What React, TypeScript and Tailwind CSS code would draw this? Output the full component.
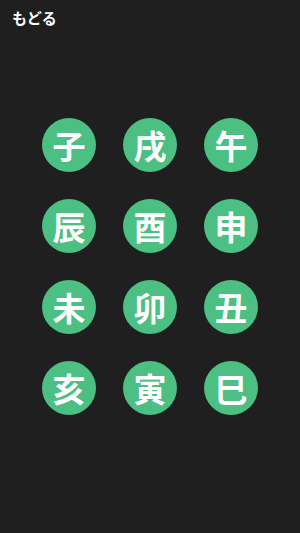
import React from 'react';

const signs = ['子', '戌', '午', '辰', '酉', '申', '未', '卯', '丑', '亥', '寅', '巳'];

export default function App() {
  return (
    <div
      className="w-[300px] h-[533px] bg-[#1e1f1e] text-white flex flex-col"
      style={{ fontFamily: '"Noto Sans CJK JP", "Noto Sans", sans-serif' }}
    >
      {/* Header */}
      <div className="h-[34px] px-3 flex items-center">
        <button className="text-[15px] font-bold leading-none">もどる</button>
      </div>

      {/* Zodiac grid */}
      <div className="mt-[84px] grid grid-cols-[repeat(3,54px)] gap-[27px] justify-center">
        {signs.map(s => (
          <div
            key={s}
            className="w-[54px] h-[54px] rounded-full bg-[#4cbf82] flex items-center justify-center text-[33px] font-bold leading-none"
          >
            {s}
          </div>
        ))}
      </div>
    </div>
  );
}
